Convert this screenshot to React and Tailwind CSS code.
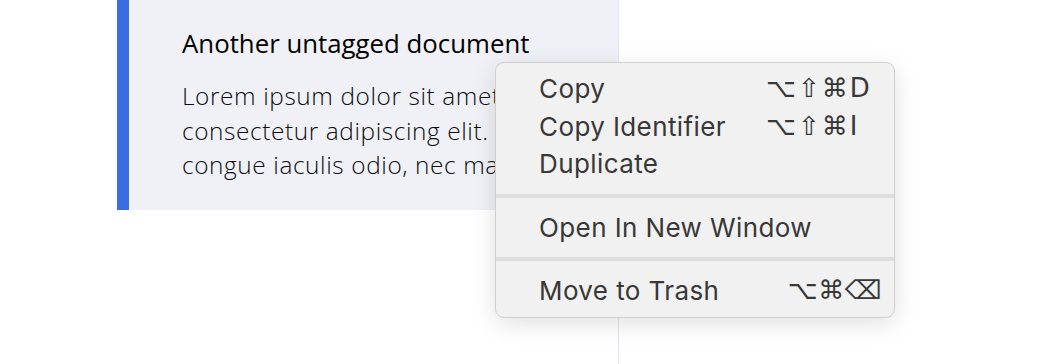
export default function App() {
  const sans = { fontFamily: '"Open Sans", sans-serif' }

  return (
    <div className="relative h-[364px] w-[1056px] overflow-hidden bg-white">
      {/* Document column */}
      <div className="ml-[117px] h-full w-[502px] border-r border-[#e3e6ee]">
        <div className="flex h-[210px] bg-[#f0f1f6]">
          <div className="w-[12px] shrink-0 bg-[#3d6be0]" />
          <div className="whitespace-nowrap pl-[53px] pt-[25px] pr-4" style={sans}>
            <h2 className="text-[25.8px] leading-[36px] text-black">Another untagged document</h2>
            <p className="mt-[18px] text-[24.4px] font-light leading-[34.5px] tracking-[0.6px] text-[#0d0d0f]">
              Lorem ipsum dolor sit amet,
              <br />
              consectetur adipiscing elit. Nam
              <br />
              congue iaculis odio, nec mattis
            </p>
          </div>
        </div>
      </div>

      {/* Context menu */}
      <ContextMenu />
    </div>
  )
}

function ContextMenu() {
  const font = { fontFamily: 'Inter, "Liberation Sans", "DejaVu Sans", sans-serif' }
  const keys = { fontFamily: '"DejaVu Sans", sans-serif' }

  const Item = ({ label, shortcut, right }) => (
    <div className="flex h-[37.5px] items-center pl-[43px] pr-[12px]">
      <span className="flex-1 tracking-[0.4px]">{label}</span>
      {shortcut && (
        <span
          className={`text-[26px] ${right ? "tracking-[0.5px]" : "w-[116px] tracking-[2px]"}`}
          style={keys}
        >
          {shortcut}
        </span>
      )}
    </div>
  )

  const Separator = () => (
    <div className="flex h-[26px] items-center">
      <div className="h-[4px] w-full bg-[#dedede]" />
    </div>
  )

  return (
    <div
      className="absolute left-[495px] top-[62px] w-[400px] rounded-[9px] border border-[#cfcfcf] bg-[#f1f1f1] py-[7px] text-[26px] text-[#383838] shadow-[0_6px_24px_rgba(0,0,0,0.12)]"
      style={font}
    >
      <Item label="Copy" shortcut="⌥⇧⌘D" />
      <Item label="Copy Identifier" shortcut="⌥⇧⌘I" />
      <Item label="Duplicate" />
      <Separator />
      <Item label="Open In New Window" />
      <Separator />
      <Item label="Move to Trash" shortcut="⌥⌘⌫" right />
    </div>
  )
}
